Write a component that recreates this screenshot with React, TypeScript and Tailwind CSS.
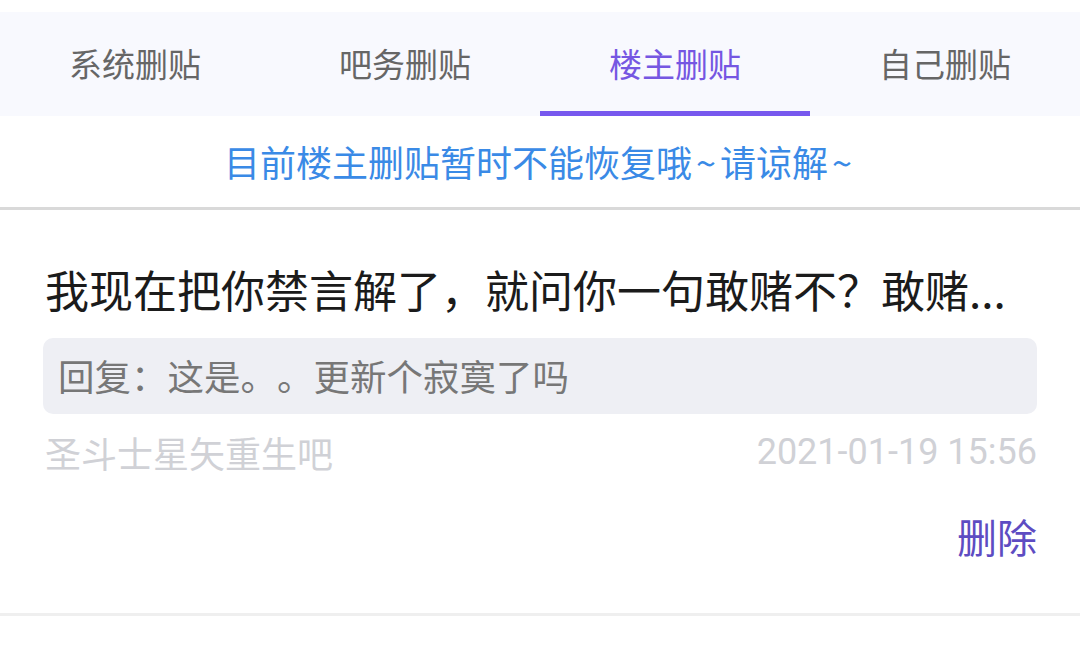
import { useState } from 'react';

const tabs = ['系统删贴', '吧务删贴', '楼主删贴', '自己删贴'];

export default function App() {
  const [activeTab, setActiveTab] = useState(2);

  return (
    <div className="w-[1080px] h-[655px] bg-white overflow-hidden font-['Noto_Sans_CJK_SC','Roboto',sans-serif] [text-spacing-trim:space-all] [font-kerning:none]">
      {/* Tabs */}
      <div className="mt-[12px] h-[104px] bg-[#f8f9fe] flex">
        {tabs.map((tab, i) => (
          <button
            key={tab}
            onClick={() => setActiveTab(i)}
            className="flex-1 relative flex items-center justify-center"
          >
            <span
              className={`text-[33px] leading-none -mt-[2px] ${
                activeTab === i ? 'text-[#7557e2]' : 'text-[#666666]'
              }`}
            >
              {tab}
            </span>
            {activeTab === i && (
              <span className="absolute left-0 right-0 bottom-0 h-[5px] bg-[#7758ee]" />
            )}
          </button>
        ))}
      </div>

      {/* Aviso */}
      <div className="h-[94px] flex items-center justify-center border-b-[3px] border-[#d9d9d9]">
        <span className="text-[36px] leading-none text-[#3a8ae6] -mt-[2px]">
          目前楼主删贴暂时不能恢复哦<span className="px-[4px]">~</span>请谅解<span className="px-[4px]">~</span>
        </span>
      </div>

      {/* Item */}
      <div className="px-[43px] pt-[54px] pb-[53px] border-b-[3px] border-[#efefef]">
        <div className="h-[50px] flex items-center pl-[2px] text-[44px] leading-none text-[#1b1b1b] whitespace-nowrap">
          我现在把你禁言解了，就问你一句敢赌不？敢赌...
        </div>

        <div className="mt-[24px] h-[76px] rounded-[10px] bg-[#eeeff4] flex items-center px-[15px]">
          <span className="text-[36.5px] leading-none text-[#777777]">回复：这是。。更新个寂寞了吗</span>
        </div>

        <div className="mt-[18px] h-[40px] flex items-center justify-between text-[36px] leading-none text-[#d0d1d6]">
          <span className="pl-[2px]">圣斗士星矢重生吧</span>
          <span className="font-['Roboto',sans-serif]">2021-01-19 15:56</span>
        </div>

        <div className="mt-[40px] h-[48px] flex items-center justify-end">
          <button className="text-[40px] leading-none text-[#5e4cc2]">删除</button>
        </div>
      </div>
    </div>
  );
}
